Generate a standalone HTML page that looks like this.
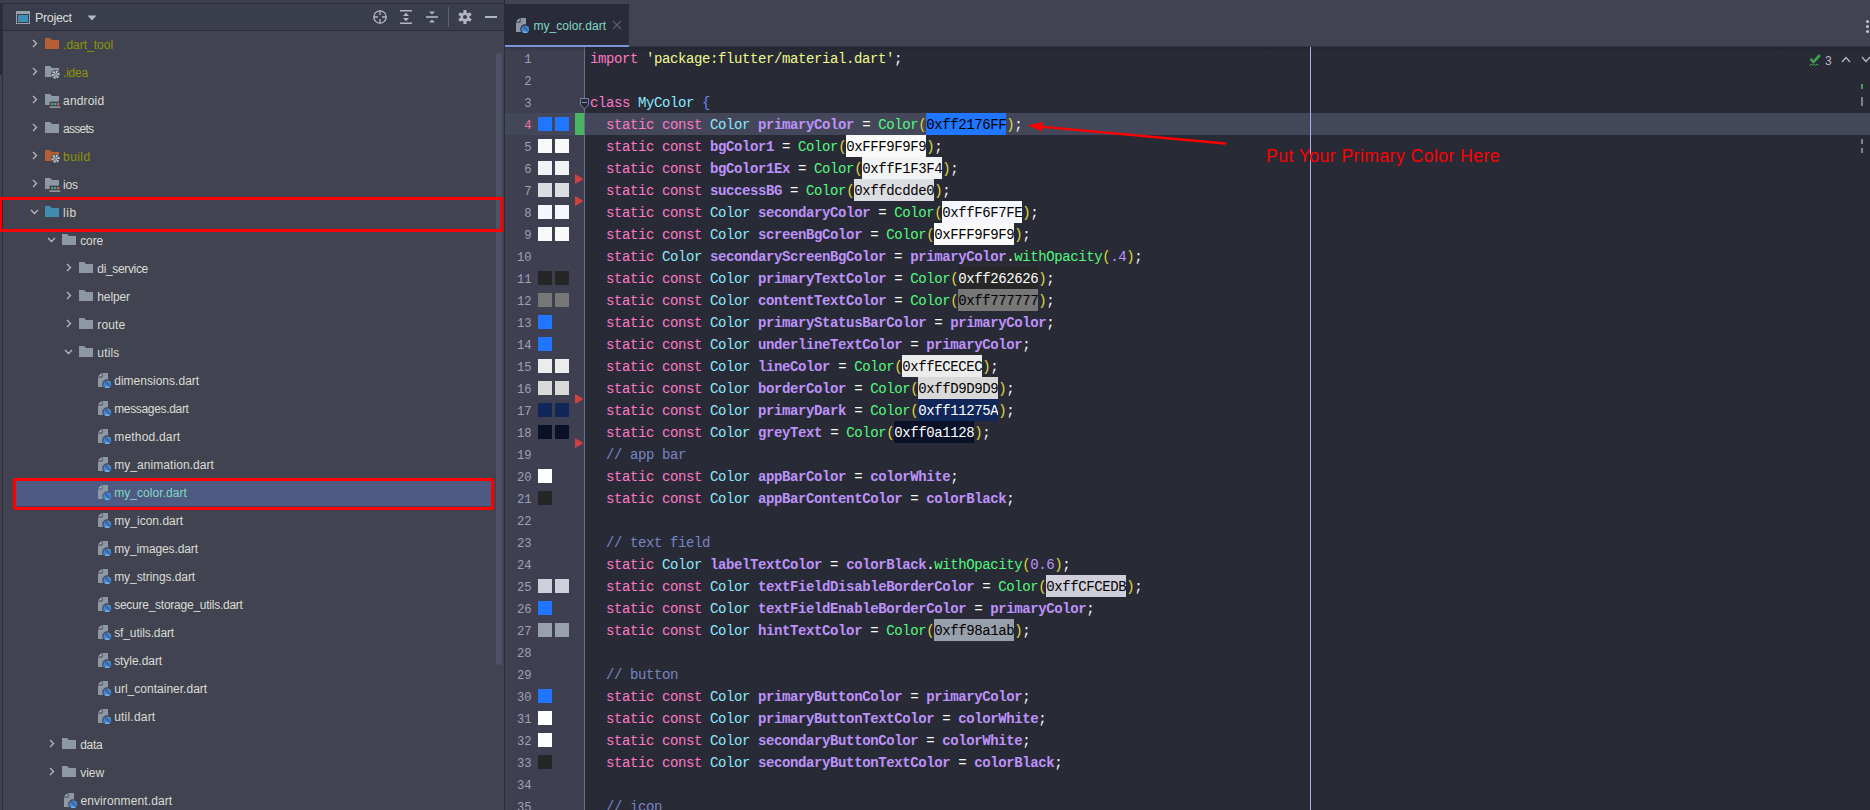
<!DOCTYPE html>
<html lang="en"><head><meta charset="utf-8"><title>my_color.dart</title>
<style>
html,body{margin:0;padding:0}
body{width:1870px;height:810px;overflow:hidden;position:relative;background:#282a36;font-family:"Liberation Sans",sans-serif;}
.abs{position:absolute}
#left{position:absolute;left:0;top:0;width:504px;height:810px;background:#414450;overflow:hidden}
#topstrip{position:absolute;left:0;top:0;width:1870px;height:3px;background:#3d3f4e}
#lhead{position:absolute;left:3px;top:4px;width:501px;height:26px;background:#3a3d4c}
.row{position:absolute;left:0;width:504px;height:28px}
.lbl{position:absolute;top:0;height:27px;padding-top:1px;line-height:28px;font-size:12px;white-space:pre}
.ic{position:absolute}
#gutter{position:absolute;left:505px;top:47px;width:79px;height:763px;background:#3e3f51}
#editor{position:absolute;left:585px;top:47px;width:1285px;height:763px;background:#282a36}
.ln{position:absolute;left:495px;width:36.6px;height:22px;line-height:22px;padding-top:2px;text-align:right;font-family:"Liberation Mono",monospace;font-size:13.5px;transform:scaleX(0.9);transform-origin:100% 50%;color:#9ea1b6}
.cl{position:absolute;left:590px;height:22px;line-height:22px;font-family:"Liberation Mono",monospace;font-size:14px;letter-spacing:-0.4px;color:#f8f8f2;white-space:pre;margin-top:1px}
.cl .h{display:inline-block;position:relative;top:-1px;height:22px;line-height:24px;vertical-align:top;overflow:hidden}
.k{color:#ff79c6}.s{color:#f1fa8c}.c{color:#8be9fd}.f{color:#bd93f9;font-weight:bold}.g{color:#50fa7b}.p{color:#e2d93e}.m{color:#7985c2}.n{color:#bd93f9}.b{color:#6f86f2}
.sw{position:absolute;width:14px;height:14px}
</style></head><body>

<div class="abs" style="left:505px;top:0;width:1365px;height:47px;background:#414450"></div>
<div class="abs" style="left:505px;top:45px;width:1365px;height:1px;background:#3e404d"></div>
<div class="abs" style="left:505px;top:46px;width:1365px;height:1px;background:#353744"></div>
<div class="abs" style="left:505px;top:4px;width:124px;height:41px;background:#292b38"></div>
<div class="abs" style="left:505px;top:45px;width:124px;height:2px;background:#7c94d7"></div>
<svg class="abs" style="left:515.5px;top:18px;color:#292b38" width="15" height="17" viewBox="0 0 15 17"><use href="#dart"/></svg>
<div class="abs" id="tabtxt" style="left:533.5px;top:15px;height:22px;line-height:22px;font-size:12px;color:#82d8c2;white-space:pre;letter-spacing:0.039px">my_color.dart</div>
<svg class="abs" style="left:612px;top:20px" width="10" height="10" viewBox="0 0 10 10"><path d="M1 1 L9 9 M9 1 L1 9" stroke="#5c5e6c" stroke-width="1.1" fill="none"/></svg>
<div id="gutter"></div><div id="editor"></div>
<div class="abs" style="left:584px;top:47px;width:1px;height:763px;background:#6b6e8c"></div>
<div class="abs" style="left:505px;top:47px;width:1365px;height:4px;background:linear-gradient(rgba(20,20,30,0.28),rgba(20,20,30,0))"></div>
<div class="abs" style="left:505px;top:113px;width:79px;height:22px;background:#44475a"></div>
<div class="abs" style="left:585px;top:113px;width:1285px;height:22px;background:#44475a"></div>
<div class="abs" style="left:575px;top:113px;width:9px;height:22px;background:#48b462"></div>
<div class="abs" style="left:1310px;top:47px;width:1px;height:763px;background:#aab2e6"></div>
<div class="ln" style="top:47px">1</div>
<div class="cl" style="top:47px"><span class="k">import</span> <span class="s">&#x27;package:flutter/material.dart&#x27;</span>;</div>
<div class="ln" style="top:69px">2</div>
<div class="ln" style="top:91px">3</div>
<div class="cl" style="top:91px"><span class="k">class</span> <span class="c">MyColor</span> <span class="b">{</span></div>
<div class="ln" style="top:113px;color:#f0709f">4</div>
<div class="sw" style="left:538px;top:117px;background:#2176ff"></div>
<div class="sw" style="left:555px;top:117px;background:#2176ff"></div>
<div class="cl" style="top:113px">  <span class="k">static</span> <span class="k">const</span> <span class="c">Color</span> <span class="f">primaryColor</span> = <span class="g">Color</span><span class="p">(</span><span class="h" style="background:#2176ff;color:#000">0xff2176FF</span><span class="p">)</span>;</div>
<div class="ln" style="top:135px">5</div>
<div class="sw" style="left:538px;top:139px;background:#f9f9f9"></div>
<div class="sw" style="left:555px;top:139px;background:#f9f9f9"></div>
<div class="cl" style="top:135px">  <span class="k">static</span> <span class="k">const</span> <span class="f">bgColor1</span> = <span class="g">Color</span><span class="p">(</span><span class="h" style="background:#f9f9f9;color:#000">0xFFF9F9F9</span><span class="p">)</span>;</div>
<div class="ln" style="top:157px">6</div>
<div class="sw" style="left:538px;top:161px;background:#f1f3f4"></div>
<div class="sw" style="left:555px;top:161px;background:#f1f3f4"></div>
<div class="cl" style="top:157px">  <span class="k">static</span> <span class="k">const</span> <span class="f">bgColor1Ex</span> = <span class="g">Color</span><span class="p">(</span><span class="h" style="background:#f1f3f4;color:#000">0xffF1F3F4</span><span class="p">)</span>;</div>
<div class="ln" style="top:179px">7</div>
<div class="sw" style="left:538px;top:183px;background:#dcdde0"></div>
<div class="sw" style="left:555px;top:183px;background:#dcdde0"></div>
<div class="cl" style="top:179px">  <span class="k">static</span> <span class="k">const</span> <span class="f">successBG</span> = <span class="g">Color</span><span class="p">(</span><span class="h" style="background:#dcdde0;color:#000">0xffdcdde0</span><span class="p">)</span>;</div>
<div class="ln" style="top:201px">8</div>
<div class="sw" style="left:538px;top:205px;background:#f6f7fe"></div>
<div class="sw" style="left:555px;top:205px;background:#f6f7fe"></div>
<div class="cl" style="top:201px">  <span class="k">static</span> <span class="k">const</span> <span class="c">Color</span> <span class="f">secondaryColor</span> = <span class="g">Color</span><span class="p">(</span><span class="h" style="background:#f6f7fe;color:#000">0xffF6F7FE</span><span class="p">)</span>;</div>
<div class="ln" style="top:223px">9</div>
<div class="sw" style="left:538px;top:227px;background:#f9f9f9"></div>
<div class="sw" style="left:555px;top:227px;background:#f9f9f9"></div>
<div class="cl" style="top:223px">  <span class="k">static</span> <span class="k">const</span> <span class="c">Color</span> <span class="f">screenBgColor</span> = <span class="g">Color</span><span class="p">(</span><span class="h" style="background:#f9f9f9;color:#000">0xFFF9F9F9</span><span class="p">)</span>;</div>
<div class="ln" style="top:245px">10</div>
<div class="cl" style="top:245px">  <span class="k">static</span> <span class="c">Color</span> <span class="f">secondaryScreenBgColor</span> = <span class="f">primaryColor</span>.<span class="g">withOpacity</span><span class="p">(</span><span class="n">.4</span><span class="p">)</span>;</div>
<div class="ln" style="top:267px">11</div>
<div class="sw" style="left:538px;top:271px;background:#262626"></div>
<div class="sw" style="left:555px;top:271px;background:#262626"></div>
<div class="cl" style="top:267px">  <span class="k">static</span> <span class="k">const</span> <span class="c">Color</span> <span class="f">primaryTextColor</span> = <span class="g">Color</span><span class="p">(</span><span class="h" style="background:#262626;color:#fff">0xff262626</span><span class="p">)</span>;</div>
<div class="ln" style="top:289px">12</div>
<div class="sw" style="left:538px;top:293px;background:#777777"></div>
<div class="sw" style="left:555px;top:293px;background:#777777"></div>
<div class="cl" style="top:289px">  <span class="k">static</span> <span class="k">const</span> <span class="c">Color</span> <span class="f">contentTextColor</span> = <span class="g">Color</span><span class="p">(</span><span class="h" style="background:#777777;color:#000">0xff777777</span><span class="p">)</span>;</div>
<div class="ln" style="top:311px">13</div>
<div class="sw" style="left:538px;top:315px;background:#2176ff"></div>
<div class="cl" style="top:311px">  <span class="k">static</span> <span class="k">const</span> <span class="c">Color</span> <span class="f">primaryStatusBarColor</span> = <span class="f">primaryColor</span>;</div>
<div class="ln" style="top:333px">14</div>
<div class="sw" style="left:538px;top:337px;background:#2176ff"></div>
<div class="cl" style="top:333px">  <span class="k">static</span> <span class="k">const</span> <span class="c">Color</span> <span class="f">underlineTextColor</span> = <span class="f">primaryColor</span>;</div>
<div class="ln" style="top:355px">15</div>
<div class="sw" style="left:538px;top:359px;background:#ececec"></div>
<div class="sw" style="left:555px;top:359px;background:#ececec"></div>
<div class="cl" style="top:355px">  <span class="k">static</span> <span class="k">const</span> <span class="c">Color</span> <span class="f">lineColor</span> = <span class="g">Color</span><span class="p">(</span><span class="h" style="background:#ececec;color:#000">0xffECECEC</span><span class="p">)</span>;</div>
<div class="ln" style="top:377px">16</div>
<div class="sw" style="left:538px;top:381px;background:#d9d9d9"></div>
<div class="sw" style="left:555px;top:381px;background:#d9d9d9"></div>
<div class="cl" style="top:377px">  <span class="k">static</span> <span class="k">const</span> <span class="c">Color</span> <span class="f">borderColor</span> = <span class="g">Color</span><span class="p">(</span><span class="h" style="background:#d9d9d9;color:#000">0xffD9D9D9</span><span class="p">)</span>;</div>
<div class="ln" style="top:399px">17</div>
<div class="sw" style="left:538px;top:403px;background:#11275a"></div>
<div class="sw" style="left:555px;top:403px;background:#11275a"></div>
<div class="cl" style="top:399px">  <span class="k">static</span> <span class="k">const</span> <span class="c">Color</span> <span class="f">primaryDark</span> = <span class="g">Color</span><span class="p">(</span><span class="h" style="background:#11275a;color:#fff">0xff11275A</span><span class="p">)</span>;</div>
<div class="ln" style="top:421px">18</div>
<div class="sw" style="left:538px;top:425px;background:#0a1128"></div>
<div class="sw" style="left:555px;top:425px;background:#0a1128"></div>
<div class="cl" style="top:421px">  <span class="k">static</span> <span class="k">const</span> <span class="c">Color</span> <span class="f">greyText</span> = <span class="g">Color</span><span class="p">(</span><span class="h" style="background:#0a1128;color:#fff">0xff0a1128</span><span class="p">)</span>;</div>
<div class="ln" style="top:443px">19</div>
<div class="cl" style="top:443px">  <span class="m">// app bar</span></div>
<div class="ln" style="top:465px">20</div>
<div class="sw" style="left:538px;top:469px;background:#ffffff"></div>
<div class="cl" style="top:465px">  <span class="k">static</span> <span class="k">const</span> <span class="c">Color</span> <span class="f">appBarColor</span> = <span class="f">colorWhite</span>;</div>
<div class="ln" style="top:487px">21</div>
<div class="sw" style="left:538px;top:491px;background:#262626"></div>
<div class="cl" style="top:487px">  <span class="k">static</span> <span class="k">const</span> <span class="c">Color</span> <span class="f">appBarContentColor</span> = <span class="f">colorBlack</span>;</div>
<div class="ln" style="top:509px">22</div>
<div class="ln" style="top:531px">23</div>
<div class="cl" style="top:531px">  <span class="m">// text field</span></div>
<div class="ln" style="top:553px">24</div>
<div class="cl" style="top:553px">  <span class="k">static</span> <span class="c">Color</span> <span class="f">labelTextColor</span> = <span class="f">colorBlack</span>.<span class="g">withOpacity</span><span class="p">(</span><span class="n">0.6</span><span class="p">)</span>;</div>
<div class="ln" style="top:575px">25</div>
<div class="sw" style="left:538px;top:579px;background:#cfcedb"></div>
<div class="sw" style="left:555px;top:579px;background:#cfcedb"></div>
<div class="cl" style="top:575px">  <span class="k">static</span> <span class="k">const</span> <span class="c">Color</span> <span class="f">textFieldDisableBorderColor</span> = <span class="g">Color</span><span class="p">(</span><span class="h" style="background:#cfcedb;color:#000">0xffCFCEDB</span><span class="p">)</span>;</div>
<div class="ln" style="top:597px">26</div>
<div class="sw" style="left:538px;top:601px;background:#2176ff"></div>
<div class="cl" style="top:597px">  <span class="k">static</span> <span class="k">const</span> <span class="c">Color</span> <span class="f">textFieldEnableBorderColor</span> = <span class="f">primaryColor</span>;</div>
<div class="ln" style="top:619px">27</div>
<div class="sw" style="left:538px;top:623px;background:#98a1ab"></div>
<div class="sw" style="left:555px;top:623px;background:#98a1ab"></div>
<div class="cl" style="top:619px">  <span class="k">static</span> <span class="k">const</span> <span class="c">Color</span> <span class="f">hintTextColor</span> = <span class="g">Color</span><span class="p">(</span><span class="h" style="background:#98a1ab;color:#000">0xff98a1ab</span><span class="p">)</span>;</div>
<div class="ln" style="top:641px">28</div>
<div class="ln" style="top:663px">29</div>
<div class="cl" style="top:663px">  <span class="m">// button</span></div>
<div class="ln" style="top:685px">30</div>
<div class="sw" style="left:538px;top:689px;background:#2176ff"></div>
<div class="cl" style="top:685px">  <span class="k">static</span> <span class="k">const</span> <span class="c">Color</span> <span class="f">primaryButtonColor</span> = <span class="f">primaryColor</span>;</div>
<div class="ln" style="top:707px">31</div>
<div class="sw" style="left:538px;top:711px;background:#ffffff"></div>
<div class="cl" style="top:707px">  <span class="k">static</span> <span class="k">const</span> <span class="c">Color</span> <span class="f">primaryButtonTextColor</span> = <span class="f">colorWhite</span>;</div>
<div class="ln" style="top:729px">32</div>
<div class="sw" style="left:538px;top:733px;background:#ffffff"></div>
<div class="cl" style="top:729px">  <span class="k">static</span> <span class="k">const</span> <span class="c">Color</span> <span class="f">secondaryButtonColor</span> = <span class="f">colorWhite</span>;</div>
<div class="ln" style="top:751px">33</div>
<div class="sw" style="left:538px;top:755px;background:#262626"></div>
<div class="cl" style="top:751px">  <span class="k">static</span> <span class="k">const</span> <span class="c">Color</span> <span class="f">secondaryButtonTextColor</span> = <span class="f">colorBlack</span>;</div>
<div class="ln" style="top:773px">34</div>
<div class="ln" style="top:795px">35</div>
<div class="cl" style="top:795px">  <span class="m">// icon</span></div>
<svg class="abs" style="left:575px;top:173px" width="9" height="12" viewBox="0 0 9 12"><path d="M0 1 L8.5 6 L0 11 Z" fill="#d0413e"/></svg>
<svg class="abs" style="left:575px;top:195px" width="9" height="12" viewBox="0 0 9 12"><path d="M0 1 L8.5 6 L0 11 Z" fill="#d0413e"/></svg>
<svg class="abs" style="left:575px;top:393px" width="9" height="12" viewBox="0 0 9 12"><path d="M0 1 L8.5 6 L0 11 Z" fill="#d0413e"/></svg>
<svg class="abs" style="left:575px;top:437px" width="9" height="12" viewBox="0 0 9 12"><path d="M0 1 L8.5 6 L0 11 Z" fill="#d0413e"/></svg>
<svg class="abs" style="left:579px;top:97px" width="12" height="14" viewBox="0 0 12 14"><path d="M1.5 1.5 H9.5 V8 L5.5 12 L1.5 8 Z" fill="#282a36" stroke="#7c80a8" stroke-width="1"/><path d="M3 5.5 H8" stroke="#8a8eb4" stroke-width="1"/></svg>
<div id="left">
<div class="abs" style="left:0;top:0;width:504px;height:3px;background:#3d3f4e"></div>
<div class="abs" style="left:0;top:3px;width:504px;height:1px;background:#2b2d3a"></div>
<div id="lhead"></div>
<div class="abs" style="left:3px;top:30px;width:501px;height:1px;background:#2b2d3a"></div>
<div class="abs" style="left:0;top:4px;width:2px;height:71px;background:#292b38"></div>
<div class="abs" style="left:0;top:75px;width:2px;height:735px;background:#414350"></div>
<div class="abs" style="left:2px;top:4px;width:1px;height:806px;background:#2b2d3a"></div>
<svg class="abs" style="left:16px;top:11px" width="14" height="13" viewBox="0 0 14 13"><rect x="0.5" y="0.5" width="13" height="12" fill="none" stroke="#9aa0ad" stroke-width="1"/><rect x="1" y="1" width="12" height="2" fill="#9aa0ad"/><rect x="2" y="4" width="10" height="7" fill="#3d8fb5"/></svg>
<div class="abs" id="projtxt" style="left:35px;top:7px;height:22px;line-height:22px;font-size:12.5px;color:#dcdcd6;letter-spacing:-0.318px">Project</div>
<svg class="abs" style="left:87px;top:15px" width="10" height="6" viewBox="0 0 10 6"><path d="M0.5 0.5 H9.5 L5 5.5 Z" fill="#b4b6bf"/></svg>
<svg class="abs" style="left:372px;top:9px" width="16" height="16" viewBox="0 0 16 16"><circle cx="8" cy="8" r="6.2" fill="none" stroke="#b4b6bf" stroke-width="1.3"/><path d="M8 1.5 V6 M8 10 V14.5 M1.5 8 H6 M10 8 H14.5" stroke="#b4b6bf" stroke-width="1.3"/></svg>
<svg class="abs" style="left:399px;top:9px" width="14" height="16" viewBox="0 0 14 16"><path d="M1 1.8 H13 M1 14.2 H13" stroke="#b4b6bf" stroke-width="1.6"/><path d="M7 3.8 L10 7 H4 Z M7 12.2 L10 9 H4 Z" fill="#b4b6bf"/></svg>
<svg class="abs" style="left:425px;top:10px" width="14" height="14" viewBox="0 0 14 14"><path d="M1 7 H13" stroke="#b4b6bf" stroke-width="1.6"/><path d="M7 4.6 L10 1.4 H4 Z M7 9.4 L10 12.6 H4 Z" fill="#b4b6bf"/></svg>
<div class="abs" style="left:448px;top:7px;width:1px;height:20px;background:#5c5e6b"></div>
<svg class="abs" style="left:458px;top:10px" width="14" height="14" viewBox="-7 -7 14 14"><g fill="#b4b6bf"><circle r="4.6"/><rect x="-1.6" y="-6.9" width="3.2" height="3.4" rx="0.6" transform="rotate(0)"/><rect x="-1.6" y="-6.9" width="3.2" height="3.4" rx="0.6" transform="rotate(60)"/><rect x="-1.6" y="-6.9" width="3.2" height="3.4" rx="0.6" transform="rotate(120)"/><rect x="-1.6" y="-6.9" width="3.2" height="3.4" rx="0.6" transform="rotate(180)"/><rect x="-1.6" y="-6.9" width="3.2" height="3.4" rx="0.6" transform="rotate(240)"/><rect x="-1.6" y="-6.9" width="3.2" height="3.4" rx="0.6" transform="rotate(300)"/></g><circle r="2" fill="#3a3d4c"/></svg>
<div class="abs" style="left:485px;top:16px;width:12px;height:2px;background:#b4b6bf"></div>
<svg class="abs" style="left:31.6px;top:39.2px" width="6" height="9" viewBox="0 0 6 9"><path d="M1 1 L4.5 4.5 L1 8" fill="none" stroke="#b6b8c2" stroke-width="1.3"/></svg>
<svg class="abs" style="left:45px;top:37px" width="16" height="16" viewBox="0 0 16 16"><path d="M0 1 H5 L7 3 H14 V12 H0 Z" fill="#b35f33"/>
</svg>
<div class="lbl" id="t0" style="left:63.1px;top:30px;color:#8f9408;letter-spacing:-0.005px">.dart_tool</div>
<svg class="abs" style="left:31.6px;top:67.2px" width="6" height="9" viewBox="0 0 6 9"><path d="M1 1 L4.5 4.5 L1 8" fill="none" stroke="#b6b8c2" stroke-width="1.3"/></svg>
<svg class="abs" style="left:45px;top:65px" width="16" height="16" viewBox="0 0 16 16"><path d="M0 1 H5 L7 3 H14 V12 H0 Z" fill="#8c98a4"/>
<circle cx="10.6" cy="9.6" r="4.7" fill="#414450"/><g transform="translate(10.6 9.6)" fill="#bcc1c9"><path d="M0 0 L0 -4.1 A4.1 4.1 0 0 1 2.64 -3.14 Z" transform="rotate(0)"/><path d="M0 0 L0 -4.1 A4.1 4.1 0 0 1 2.64 -3.14 Z" transform="rotate(60)"/><path d="M0 0 L0 -4.1 A4.1 4.1 0 0 1 2.64 -3.14 Z" transform="rotate(120)"/><path d="M0 0 L0 -4.1 A4.1 4.1 0 0 1 2.64 -3.14 Z" transform="rotate(180)"/><path d="M0 0 L0 -4.1 A4.1 4.1 0 0 1 2.64 -3.14 Z" transform="rotate(240)"/><path d="M0 0 L0 -4.1 A4.1 4.1 0 0 1 2.64 -3.14 Z" transform="rotate(300)"/></g>
</svg>
<div class="lbl" id="t1" style="left:63.1px;top:58px;color:#8f9408;letter-spacing:-0.258px">.idea</div>
<svg class="abs" style="left:31.6px;top:95.2px" width="6" height="9" viewBox="0 0 6 9"><path d="M1 1 L4.5 4.5 L1 8" fill="none" stroke="#b6b8c2" stroke-width="1.3"/></svg>
<svg class="abs" style="left:45px;top:93px" width="16" height="16" viewBox="0 0 16 16"><path d="M0 1 H5 L7 3 H14 V12 H0 Z" fill="#8c98a4"/>
<rect x="4.5" y="8.6" width="11" height="6" fill="#414450"/><rect x="6" y="10" width="2.2" height="2.2" fill="#58a34b"/><rect x="9" y="10" width="2.2" height="2.2" fill="#3c9ac7"/><rect x="12" y="10" width="2.2" height="2.2" fill="#d9633a"/><rect x="4.5" y="13.6" width="10.8" height="1" fill="#c3c7cf"/>
</svg>
<div class="lbl" id="t2" style="left:63.1px;top:86px;color:#dcdcd6;letter-spacing:0.161px">android</div>
<svg class="abs" style="left:31.6px;top:123.2px" width="6" height="9" viewBox="0 0 6 9"><path d="M1 1 L4.5 4.5 L1 8" fill="none" stroke="#b6b8c2" stroke-width="1.3"/></svg>
<svg class="abs" style="left:45px;top:121px" width="16" height="16" viewBox="0 0 16 16"><path d="M0 1 H5 L7 3 H14 V12 H0 Z" fill="#8c98a4"/>
</svg>
<div class="lbl" id="t3" style="left:63.1px;top:114px;color:#dcdcd6;letter-spacing:-0.738px">assets</div>
<svg class="abs" style="left:31.6px;top:151.2px" width="6" height="9" viewBox="0 0 6 9"><path d="M1 1 L4.5 4.5 L1 8" fill="none" stroke="#b6b8c2" stroke-width="1.3"/></svg>
<svg class="abs" style="left:45px;top:149px" width="16" height="16" viewBox="0 0 16 16"><path d="M0 1 H5 L7 3 H14 V12 H0 Z" fill="#b35f33"/>
<circle cx="10.6" cy="9.6" r="4.7" fill="#414450"/><g transform="translate(10.6 9.6)" fill="#bcc1c9"><path d="M0 0 L0 -4.1 A4.1 4.1 0 0 1 2.64 -3.14 Z" transform="rotate(0)"/><path d="M0 0 L0 -4.1 A4.1 4.1 0 0 1 2.64 -3.14 Z" transform="rotate(60)"/><path d="M0 0 L0 -4.1 A4.1 4.1 0 0 1 2.64 -3.14 Z" transform="rotate(120)"/><path d="M0 0 L0 -4.1 A4.1 4.1 0 0 1 2.64 -3.14 Z" transform="rotate(180)"/><path d="M0 0 L0 -4.1 A4.1 4.1 0 0 1 2.64 -3.14 Z" transform="rotate(240)"/><path d="M0 0 L0 -4.1 A4.1 4.1 0 0 1 2.64 -3.14 Z" transform="rotate(300)"/></g>
</svg>
<div class="lbl" id="t4" style="left:63.1px;top:142px;color:#8f9408;letter-spacing:0.41px">build</div>
<svg class="abs" style="left:31.6px;top:179.2px" width="6" height="9" viewBox="0 0 6 9"><path d="M1 1 L4.5 4.5 L1 8" fill="none" stroke="#b6b8c2" stroke-width="1.3"/></svg>
<svg class="abs" style="left:45px;top:177px" width="16" height="16" viewBox="0 0 16 16"><path d="M0 1 H5 L7 3 H14 V12 H0 Z" fill="#8c98a4"/>
<rect x="4.5" y="8.6" width="11" height="6" fill="#414450"/><rect x="6" y="10" width="2.2" height="2.2" fill="#58a34b"/><rect x="9" y="10" width="2.2" height="2.2" fill="#3c9ac7"/><rect x="12" y="10" width="2.2" height="2.2" fill="#d9633a"/><rect x="4.5" y="13.6" width="10.8" height="1" fill="#c3c7cf"/>
</svg>
<div class="lbl" id="t5" style="left:63.1px;top:170px;color:#dcdcd6;letter-spacing:-0.172px">ios</div>
<svg class="abs" style="left:30px;top:208.7px" width="9" height="6" viewBox="0 0 9 6"><path d="M1 1 L4.5 4.5 L8 1" fill="none" stroke="#b6b8c2" stroke-width="1.3"/></svg>
<svg class="abs" style="left:45px;top:205px" width="16" height="16" viewBox="0 0 16 16"><path d="M0 1 H5 L7 3 H14 V12 H0 Z" fill="#3f8cae"/>
</svg>
<div class="lbl" id="t6" style="left:63.1px;top:198px;color:#dcdcd6;letter-spacing:0.492px">lib</div>
<svg class="abs" style="left:47px;top:236.7px" width="9" height="6" viewBox="0 0 9 6"><path d="M1 1 L4.5 4.5 L8 1" fill="none" stroke="#b6b8c2" stroke-width="1.3"/></svg>
<svg class="abs" style="left:62px;top:233px" width="16" height="16" viewBox="0 0 16 16"><path d="M0 1 H5 L7 3 H14 V12 H0 Z" fill="#8c98a4"/>
</svg>
<div class="lbl" id="t7" style="left:80.2px;top:226px;color:#dcdcd6;letter-spacing:-0.115px">core</div>
<svg class="abs" style="left:65.6px;top:263.2px" width="6" height="9" viewBox="0 0 6 9"><path d="M1 1 L4.5 4.5 L1 8" fill="none" stroke="#b6b8c2" stroke-width="1.3"/></svg>
<svg class="abs" style="left:79px;top:261px" width="16" height="16" viewBox="0 0 16 16"><path d="M0 1 H5 L7 3 H14 V12 H0 Z" fill="#8c98a4"/>
</svg>
<div class="lbl" id="t8" style="left:97.30000000000001px;top:254px;color:#dcdcd6;letter-spacing:-0.337px">di_service</div>
<svg class="abs" style="left:65.6px;top:291.2px" width="6" height="9" viewBox="0 0 6 9"><path d="M1 1 L4.5 4.5 L1 8" fill="none" stroke="#b6b8c2" stroke-width="1.3"/></svg>
<svg class="abs" style="left:79px;top:289px" width="16" height="16" viewBox="0 0 16 16"><path d="M0 1 H5 L7 3 H14 V12 H0 Z" fill="#8c98a4"/>
</svg>
<div class="lbl" id="t9" style="left:97.30000000000001px;top:282px;color:#dcdcd6;letter-spacing:-0.132px">helper</div>
<svg class="abs" style="left:65.6px;top:319.2px" width="6" height="9" viewBox="0 0 6 9"><path d="M1 1 L4.5 4.5 L1 8" fill="none" stroke="#b6b8c2" stroke-width="1.3"/></svg>
<svg class="abs" style="left:79px;top:317px" width="16" height="16" viewBox="0 0 16 16"><path d="M0 1 H5 L7 3 H14 V12 H0 Z" fill="#8c98a4"/>
</svg>
<div class="lbl" id="t10" style="left:97.30000000000001px;top:310px;color:#dcdcd6;letter-spacing:0.16px">route</div>
<svg class="abs" style="left:64px;top:348.7px" width="9" height="6" viewBox="0 0 9 6"><path d="M1 1 L4.5 4.5 L8 1" fill="none" stroke="#b6b8c2" stroke-width="1.3"/></svg>
<svg class="abs" style="left:79px;top:345px" width="16" height="16" viewBox="0 0 16 16"><path d="M0 1 H5 L7 3 H14 V12 H0 Z" fill="#8c98a4"/>
</svg>
<div class="lbl" id="t11" style="left:97.30000000000001px;top:338px;color:#dcdcd6;letter-spacing:0.164px">utils</div>
<svg class="abs" style="left:98px;top:373px;color:#414450" width="15" height="17" viewBox="0 0 15 17"><use href="#dart"/></svg>
<div class="lbl" id="t12" style="left:114.2px;top:366px;color:#dcdcd6;letter-spacing:0.02px">dimensions.dart</div>
<svg class="abs" style="left:98px;top:401px;color:#414450" width="15" height="17" viewBox="0 0 15 17"><use href="#dart"/></svg>
<div class="lbl" id="t13" style="left:114.2px;top:394px;color:#dcdcd6;letter-spacing:-0.334px">messages.dart</div>
<svg class="abs" style="left:98px;top:429px;color:#414450" width="15" height="17" viewBox="0 0 15 17"><use href="#dart"/></svg>
<div class="lbl" id="t14" style="left:114.2px;top:422px;color:#dcdcd6;letter-spacing:0.195px">method.dart</div>
<svg class="abs" style="left:98px;top:457px;color:#414450" width="15" height="17" viewBox="0 0 15 17"><use href="#dart"/></svg>
<div class="lbl" id="t15" style="left:114.2px;top:450px;color:#dcdcd6;letter-spacing:0.061px">my_animation.dart</div>
<div class="abs" style="left:14px;top:478px;width:479px;height:28px;background:#4e5a82"></div>
<svg class="abs" style="left:98px;top:485px;color:#4e5a82" width="15" height="17" viewBox="0 0 15 17"><use href="#dart"/></svg>
<div class="lbl" id="t16" style="left:114.2px;top:478px;color:#82d8c2;letter-spacing:0.056px">my_color.dart</div>
<svg class="abs" style="left:98px;top:513px;color:#414450" width="15" height="17" viewBox="0 0 15 17"><use href="#dart"/></svg>
<div class="lbl" id="t17" style="left:114.2px;top:506px;color:#dcdcd6;letter-spacing:0.027px">my_icon.dart</div>
<svg class="abs" style="left:98px;top:541px;color:#414450" width="15" height="17" viewBox="0 0 15 17"><use href="#dart"/></svg>
<div class="lbl" id="t18" style="left:114.2px;top:534px;color:#dcdcd6;letter-spacing:-0.121px">my_images.dart</div>
<svg class="abs" style="left:98px;top:569px;color:#414450" width="15" height="17" viewBox="0 0 15 17"><use href="#dart"/></svg>
<div class="lbl" id="t19" style="left:114.2px;top:562px;color:#dcdcd6;letter-spacing:-0.074px">my_strings.dart</div>
<svg class="abs" style="left:98px;top:597px;color:#414450" width="15" height="17" viewBox="0 0 15 17"><use href="#dart"/></svg>
<div class="lbl" id="t20" style="left:114.2px;top:590px;color:#dcdcd6;letter-spacing:-0.252px">secure_storage_utils.dart</div>
<svg class="abs" style="left:98px;top:625px;color:#414450" width="15" height="17" viewBox="0 0 15 17"><use href="#dart"/></svg>
<div class="lbl" id="t21" style="left:114.2px;top:618px;color:#dcdcd6;letter-spacing:-0.113px">sf_utils.dart</div>
<svg class="abs" style="left:98px;top:653px;color:#414450" width="15" height="17" viewBox="0 0 15 17"><use href="#dart"/></svg>
<div class="lbl" id="t22" style="left:114.2px;top:646px;color:#dcdcd6;letter-spacing:-0.076px">style.dart</div>
<svg class="abs" style="left:98px;top:681px;color:#414450" width="15" height="17" viewBox="0 0 15 17"><use href="#dart"/></svg>
<div class="lbl" id="t23" style="left:114.2px;top:674px;color:#dcdcd6;letter-spacing:0.016px">url_container.dart</div>
<svg class="abs" style="left:98px;top:709px;color:#414450" width="15" height="17" viewBox="0 0 15 17"><use href="#dart"/></svg>
<div class="lbl" id="t24" style="left:114.2px;top:702px;color:#dcdcd6;letter-spacing:0.205px">util.dart</div>
<svg class="abs" style="left:48.6px;top:739.2px" width="6" height="9" viewBox="0 0 6 9"><path d="M1 1 L4.5 4.5 L1 8" fill="none" stroke="#b6b8c2" stroke-width="1.3"/></svg>
<svg class="abs" style="left:62px;top:737px" width="16" height="16" viewBox="0 0 16 16"><path d="M0 1 H5 L7 3 H14 V12 H0 Z" fill="#8c98a4"/>
</svg>
<div class="lbl" id="t25" style="left:80.2px;top:730px;color:#dcdcd6;letter-spacing:-0.32px">data</div>
<svg class="abs" style="left:48.6px;top:767.2px" width="6" height="9" viewBox="0 0 6 9"><path d="M1 1 L4.5 4.5 L1 8" fill="none" stroke="#b6b8c2" stroke-width="1.3"/></svg>
<svg class="abs" style="left:62px;top:765px" width="16" height="16" viewBox="0 0 16 16"><path d="M0 1 H5 L7 3 H14 V12 H0 Z" fill="#8c98a4"/>
</svg>
<div class="lbl" id="t26" style="left:80.2px;top:758px;color:#dcdcd6;letter-spacing:-0.005px">view</div>
<svg class="abs" style="left:64px;top:793px;color:#414450" width="15" height="17" viewBox="0 0 15 17"><use href="#dart"/></svg>
<div class="lbl" id="t27" style="left:80.4px;top:786px;color:#dcdcd6;letter-spacing:0.117px">environment.dart</div>
<div class="abs" style="left:496px;top:53px;width:6px;height:612px;border-radius:3px;background:#4d5269"></div>
<div class="abs" style="left:-1px;top:197px;width:498px;height:29px;border:3px solid #ff0000"></div>
<div class="abs" style="left:13px;top:478px;width:475px;height:26px;border:3px solid #ff0000;border-radius:2px"></div>
</div>
<div class="abs" style="left:504px;top:3px;width:1px;height:807px;background:#2b2d3a"></div>
<svg class="abs" style="left:1808px;top:53px" width="14" height="14" viewBox="0 0 14 14"><path d="M2.5 6 L5.5 9 L12 2" fill="none" stroke="#3fa24a" stroke-width="2.6"/><path d="M1.5 12.5 l1.5 -1.6 l1.5 1.6 l1.5 -1.6 l1.5 1.6 l1.5 -1.6 l1.5 1.6" fill="none" stroke="#3fa24a" stroke-width="1"/></svg>
<div class="abs" style="left:1825px;top:51px;height:20px;line-height:20px;font-size:12px;color:#b9bbc4">3</div>
<svg class="abs" style="left:1841px;top:56px" width="10" height="7" viewBox="0 0 10 7"><path d="M1 6 L5 1.5 L9 6" fill="none" stroke="#b6b8c2" stroke-width="1.3"/></svg>
<svg class="abs" style="left:1861px;top:56px" width="10" height="7" viewBox="0 0 10 7"><path d="M1 1 L5 5.5 L9 1" fill="none" stroke="#b6b8c2" stroke-width="1.3"/></svg>
<div class="abs" style="left:1861px;top:84px;width:2px;height:5px;background:#4b9a58"></div>
<div class="abs" style="left:1861px;top:97px;width:2px;height:9px;background:#7d828c"></div>
<div class="abs" style="left:1861px;top:139px;width:2px;height:5px;background:#7d828c"></div>
<div class="abs" style="left:1861px;top:148px;width:2px;height:5px;background:#7d828c"></div>
<div class="abs" style="left:1866px;top:20px;width:3px;height:3px;border-radius:1.5px;background:#c4c6cf"></div>
<div class="abs" style="left:1866px;top:25px;width:3px;height:3px;border-radius:1.5px;background:#c4c6cf"></div>
<div class="abs" style="left:1866px;top:30px;width:3px;height:3px;border-radius:1.5px;background:#c4c6cf"></div>
<svg class="abs" style="left:1020px;top:110px" width="220" height="50" viewBox="1020 110 220 50"><path d="M1225 143.5 L1040 126.6" stroke="#ff0000" stroke-width="2.4" stroke-linecap="round" fill="none"/><path d="M1027.6 125.6 L1042.6 122 L1042.2 131.6 Z" fill="#ff0000"/></svg>
<div class="abs" id="ann" style="left:1266px;top:144px;height:24px;line-height:24px;font-size:17.6px;color:#ff0000;white-space:pre;letter-spacing:0.447px">Put Your Primary Color Here</div>
<svg width="0" height="0" style="position:absolute"><defs>
<g id="dart"><path d="M4.5 0 H10 V14 H0 V4.5 H4.5 Z" fill="#8c98a4"/><path d="M0 3.6 L3.6 0 V3.6 Z" fill="#a6afba"/><circle cx="9.2" cy="11.2" r="4.9" fill="currentColor"/><path d="M9.2 7.2 L12.6 8.6 L13.3 12 L11.2 15 H7.4 L5.2 12.4 L5.8 9 Z" fill="#4b86cc"/><path d="M6.4 9.2 L8.2 7.8 L12.8 13 L11.4 14.6 Z" fill="#3568ad"/><path d="M6.6 13.6 L11.8 13.6 L11 15 H7.6 Z" fill="#6db3ee"/></g>
</defs></svg>
</body></html>
